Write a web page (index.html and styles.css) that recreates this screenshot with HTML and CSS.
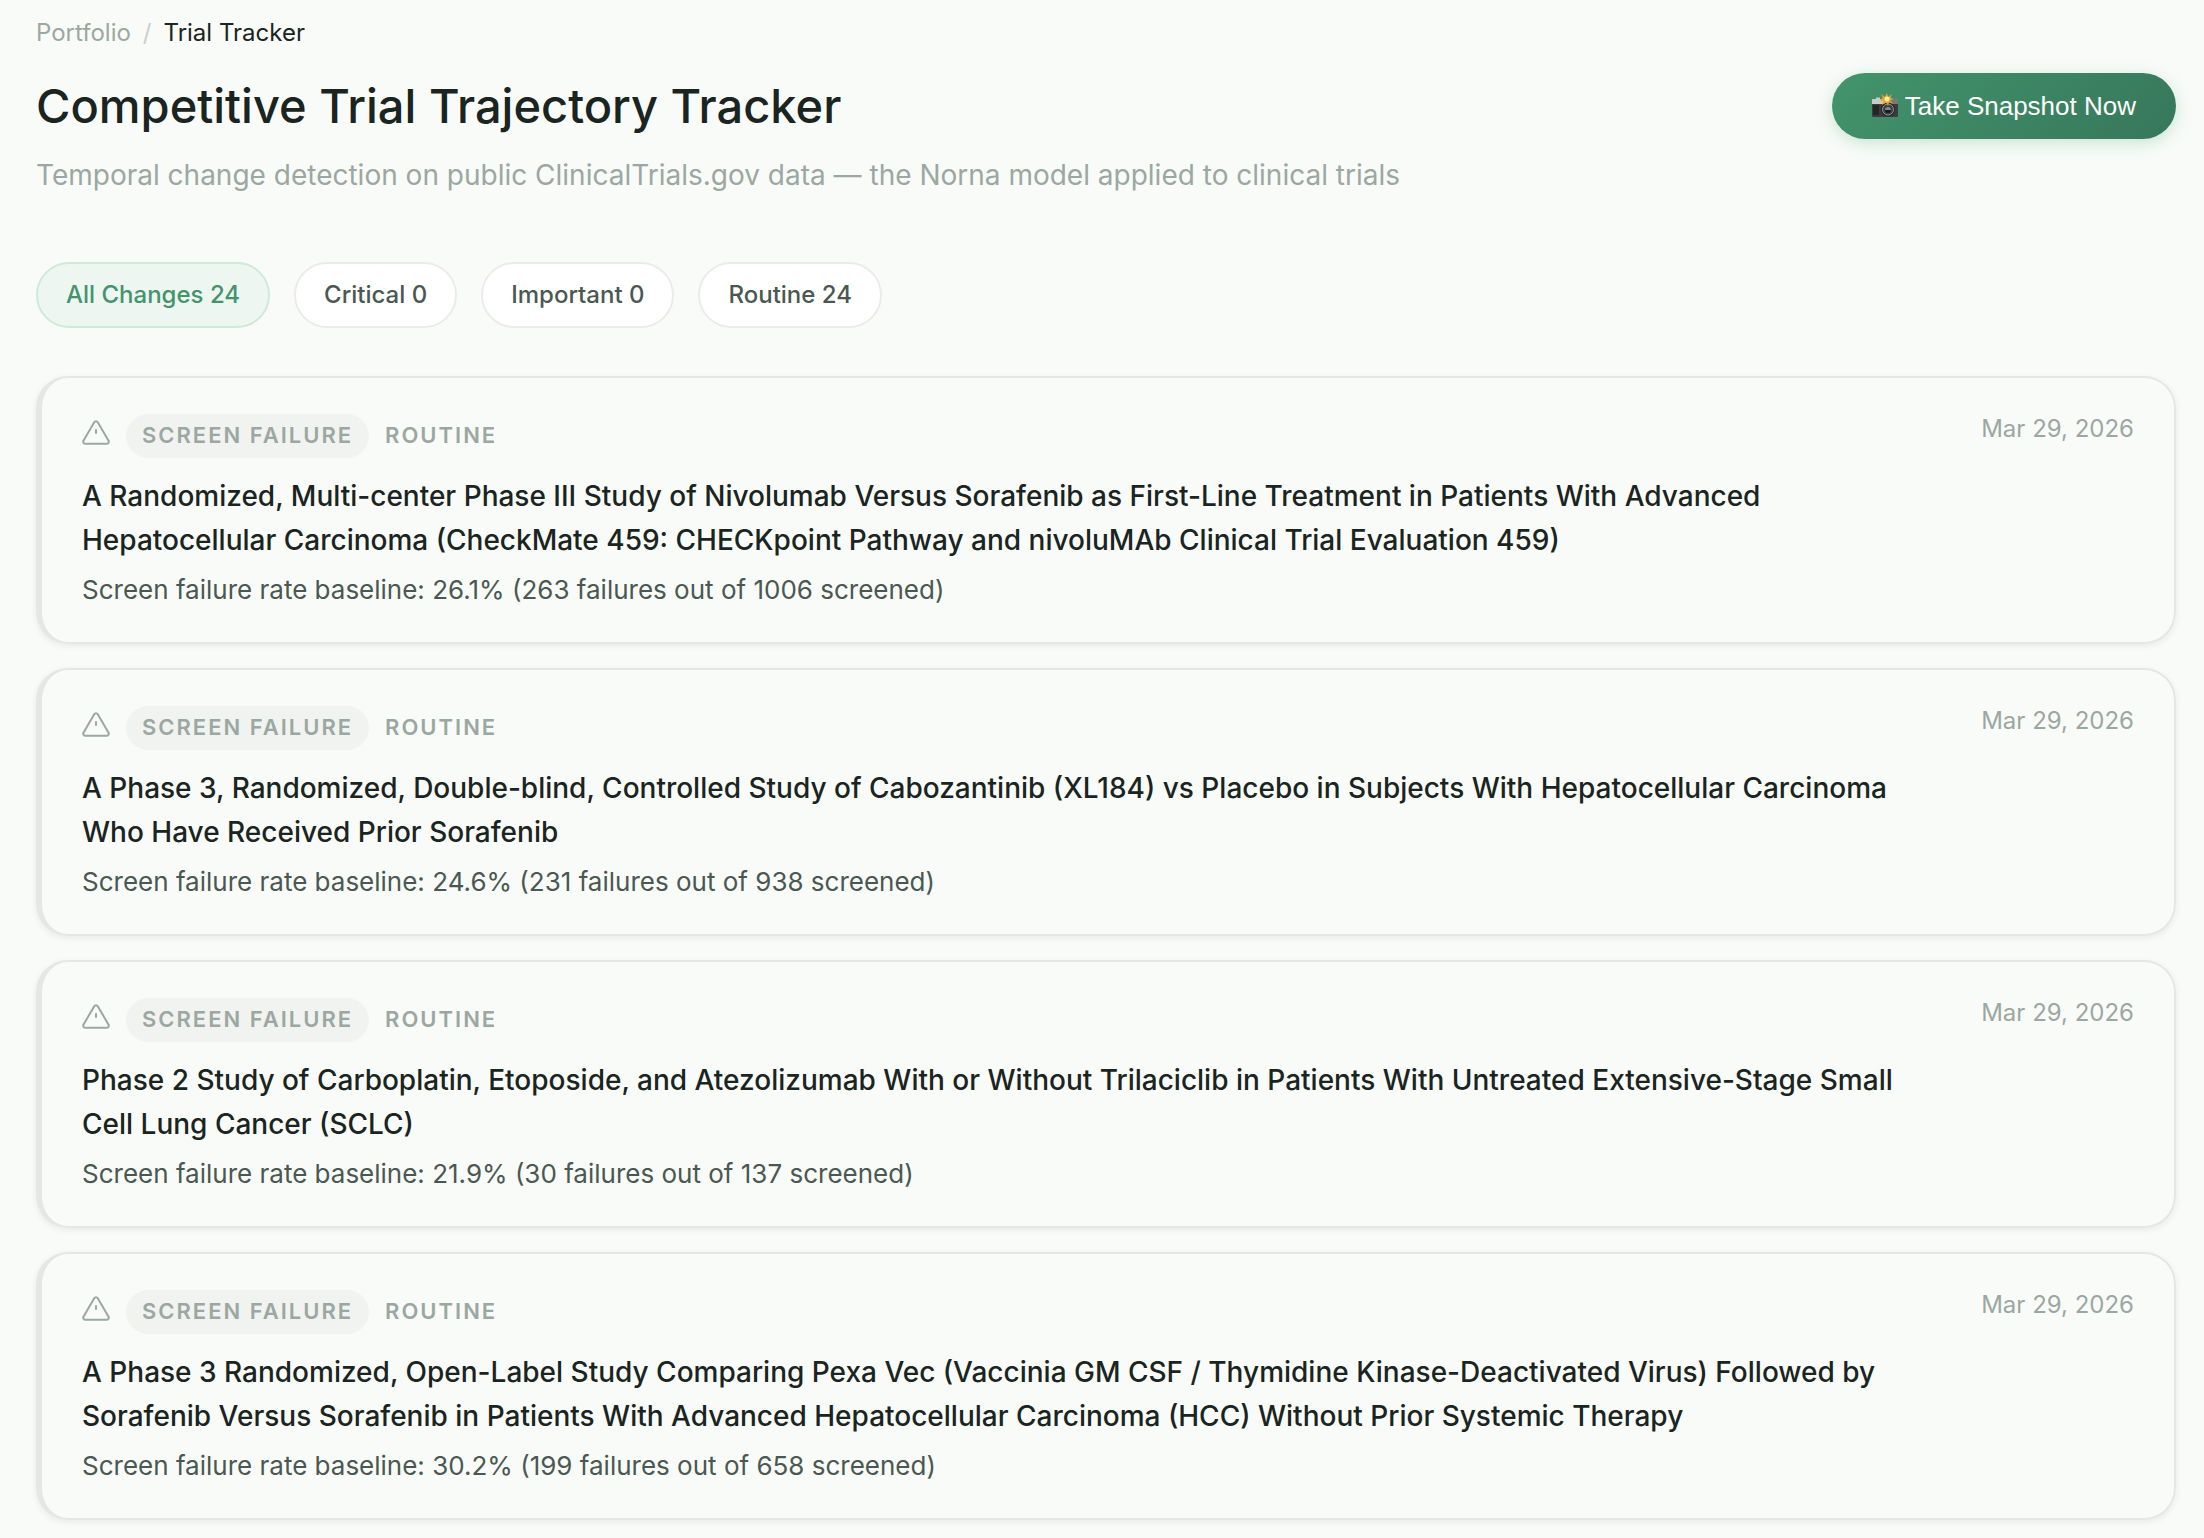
FILE: index.html
```html
<!DOCTYPE html>
<html lang="en">
<head>
    <meta charset="UTF-8">
    <meta name="viewport" content="width=device-width, initial-scale=1.0">
    <title>Competitive Trial Trajectory Tracker</title>
    <link rel="stylesheet" href="styles.css">
</head>
<body>
    <!-- Shared alert icon -->
    <svg class="sprite" aria-hidden="true">
        <symbol id="icon-alert" viewBox="0 0 28 28">
            <path d="M12.1 3.400 1.600 21.400A2.200 2.200 0 0 0 3.500 24.800h21a2.200 2.200 0 0 0 1.900-3.400L15.900 3.400a2.200 2.200 0 0 0-3.800 0Z"/>
            <path d="M14 11v3"/>
        </symbol>
    </svg>

    <div class="page">
        <nav class="breadcrumb" aria-label="Breadcrumb">
            <a href="#">Portfolio</a>
            <span class="separator">/</span>
            <span class="current">Trial Tracker</span>
        </nav>

        <header class="page-header">
            <h1>Competitive Trial Trajectory Tracker</h1>
            <button type="button" class="snapshot-btn">
                <svg class="camera" viewBox="0 0 26 26" aria-hidden="true">
                    <path fill="#3b3b3d" d="M0 9.500h26v13a1.500 1.500 0 0 1-1.500 1.500h-23A1.500 1.500 0 0 1 0 22.500Z"/>
                    <path fill="#c9cccd" d="M1 6h3V4.500h4V6h2l2-2h6l2 2h5a1 1 0 0 1 1 1v4H0V7a1 1 0 0 1 1-1Z"/>
                    <path fill="#77797b" d="M18 6h7a1 1 0 0 1 1 1v4h-9Z"/>
                    <path fill="#252527" d="M1 12h6v10H1Z"/>
                    <circle cx="16" cy="16.500" r="7" fill="#242527"/>
                    <circle cx="16" cy="16.500" r="5.500" fill="#3d4042" stroke="#919596"/>
                    <circle cx="16" cy="17" r="3" fill="#17191c"/>
                    <path fill="#858a8f" d="M13 17a3 3 0 0 1 6 0Z"/>
                    <path fill="#f6a128" d="m15 0 1 4 4-3-2 4 4 1-4 1 3 4-4-2-1 4-2-4-4 3 1-4-4-1 4-2-2-4 4 3Z"/>
                    <circle cx="15" cy="6" r="2.500" fill="#fff0a0"/>
                </svg>
                <span>Take Snapshot Now</span>
            </button>
        </header>
        <p class="subtitle">Temporal change detection on public ClinicalTrials.gov data — the Norna model applied to clinical trials</p>

        <div class="filters">
            <button type="button" class="filter active">All Changes 24</button>
            <button type="button" class="filter">Critical 0</button>
            <button type="button" class="filter">Important 0</button>
            <button type="button" class="filter">Routine 24</button>
        </div>

        <main class="changes">
            <article class="card">
                <div class="card-body">
                    <div class="card-meta">
                        <svg class="icon" aria-hidden="true"><use href="#icon-alert"/></svg>
                        <span class="badge">Screen Failure</span>
                        <span class="severity">Routine</span>
                    </div>
                    <h2>A Randomized, Multi-center Phase III Study of Nivolumab Versus Sorafenib as First-Line Treatment in Patients With Advanced Hepatocellular Carcinoma (CheckMate 459: CHECKpoint Pathway and nivoluMAb Clinical Trial Evaluation 459)</h2>
                    <p class="detail">Screen failure rate baseline: 26.1% (263 failures out of 1006 screened)</p>
                </div>
                <time class="date" datetime="2026-03-29">Mar 29, 2026</time>
            </article>

            <article class="card">
                <div class="card-body">
                    <div class="card-meta">
                        <svg class="icon" aria-hidden="true"><use href="#icon-alert"/></svg>
                        <span class="badge">Screen Failure</span>
                        <span class="severity">Routine</span>
                    </div>
                    <h2>A Phase 3, Randomized, Double-blind, Controlled Study of Cabozantinib (XL184) vs Placebo in Subjects With Hepatocellular Carcinoma Who Have Received Prior Sorafenib</h2>
                    <p class="detail">Screen failure rate baseline: 24.6% (231 failures out of 938 screened)</p>
                </div>
                <time class="date" datetime="2026-03-29">Mar 29, 2026</time>
            </article>

            <article class="card">
                <div class="card-body">
                    <div class="card-meta">
                        <svg class="icon" aria-hidden="true"><use href="#icon-alert"/></svg>
                        <span class="badge">Screen Failure</span>
                        <span class="severity">Routine</span>
                    </div>
                    <h2>Phase 2 Study of Carboplatin, Etoposide, and Atezolizumab With or Without Trilaciclib in Patients With Untreated Extensive-Stage Small Cell Lung Cancer (SCLC)</h2>
                    <p class="detail">Screen failure rate baseline: 21.9% (30 failures out of 137 screened)</p>
                </div>
                <time class="date" datetime="2026-03-29">Mar 29, 2026</time>
            </article>

            <article class="card">
                <div class="card-body">
                    <div class="card-meta">
                        <svg class="icon" aria-hidden="true"><use href="#icon-alert"/></svg>
                        <span class="badge">Screen Failure</span>
                        <span class="severity">Routine</span>
                    </div>
                    <h2>A Phase 3 Randomized, Open-Label Study Comparing Pexa Vec (Vaccinia GM CSF / Thymidine Kinase-Deactivated Virus) Followed by Sorafenib Versus Sorafenib in Patients With Advanced Hepatocellular Carcinoma (HCC) Without Prior Systemic Therapy</h2>
                    <p class="detail">Screen failure rate baseline: 30.2% (199 failures out of 658 screened)</p>
                </div>
                <time class="date" datetime="2026-03-29">Mar 29, 2026</time>
            </article>
        </main>
    </div>
</body>
</html>
```
FILE: styles.css
```css
* {
    margin: 0;
    padding: 0;
    box-sizing: border-box;
}

body {
    font-family: Inter, "Liberation Sans", sans-serif;
    background: #f9fbf8;
    color: #1a2421;
}

.sprite {
    display: none;
}

.page {
    padding: 13px 28px 18px 36px;
}

.breadcrumb {
    display: flex;
    gap: 12px;
    margin-bottom: 20px;
    font-size: 24px;
    line-height: 40px;
}

.breadcrumb a {
    color: #9ba8a1;
    text-decoration: none;
}

.separator {
    color: #c9d0cc;
}

.page-header {
    display: flex;
    align-items: center;
    justify-content: space-between;
}

h1 {
    font-size: 47px;
    font-weight: 500;
    line-height: 66px;
}

.snapshot-btn {
    display: flex;
    align-items: center;
    gap: 7px;
    height: 66px;
    padding: 0 40px;
    border: none;
    border-radius: 33px;
    background: linear-gradient(135deg, #43946c 0%, #36775b 100%);
    box-shadow: 0 4px 16px rgba(61, 160, 110, 0.25);
    color: white;
    font-family: "Liberation Sans", Arial, sans-serif;
    font-size: 26px;
    cursor: pointer;
}

.camera {
    width: 26px;
    height: 26px;
}

.subtitle {
    margin: 14px 0 64px;
    color: #9ba8a1;
    font-size: 28px;
    line-height: 45px;
}

.filters {
    display: flex;
    gap: 24px;
    margin-bottom: 48px;
}

.filter {
    height: 66px;
    padding: 0 28px 2px;
    border: 2px solid #ebecea;
    border-radius: 33px;
    background: white;
    color: #4a5852;
    font-family: inherit;
    font-size: 24px;
    font-weight: 500;
    cursor: pointer;
}

.filter.active {
    border-color: #cdeadb;
    background: #eef6f1;
    color: #43946c;
}

.changes {
    display: flex;
    flex-direction: column;
    gap: 24px;
}

.card {
    display: flex;
    align-items: flex-start;
    justify-content: space-between;
    gap: 40px;
    padding: 36px 40px 33px;
    border: 2px solid #e4e7e3;
    border-left-width: 6px;
    border-radius: 32px;
    box-shadow: 0 2px 6px rgba(26, 36, 33, 0.08);
}

.card-meta {
    display: flex;
    align-items: center;
    gap: 16px;
    margin-bottom: 16px;
    color: #9ba8a1;
    font-size: 22px;
    font-weight: 600;
    letter-spacing: 2px;
    line-height: 42px;
    text-transform: uppercase;
}

.icon {
    width: 28px;
    height: 28px;
    margin-bottom: 6px;
    fill: none;
    stroke: currentColor;
    stroke-width: 2;
    stroke-linecap: round;
    stroke-linejoin: round;
}

.badge,
.severity {
    padding-bottom: 2px;
}

.badge {
    padding-left: 16px;
    padding-right: 16px;
    border-radius: 22px;
    background: #f1f3f0;
}

h2 {
    margin-bottom: 8px;
    font-size: 28px;
    font-weight: 500;
    line-height: 44px;
}

.detail {
    color: #4a5852;
    font-size: 26px;
    line-height: 39px;
}

.date {
    color: #9ba8a1;
    font-size: 24px;
    line-height: 30px;
    white-space: nowrap;
}
```
